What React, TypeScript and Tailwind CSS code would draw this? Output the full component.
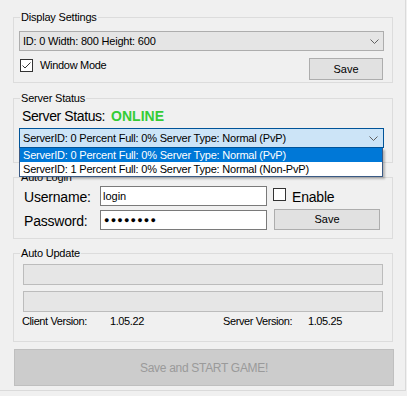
const sans = "font-['Liberation_Sans',Arial,sans-serif]";

function Chevron() {
  return (
    <svg width="9" height="5" viewBox="0 0 9 5" className="shrink-0">
      <path d="M0.5 0.5 L4.5 4.5 L8.5 0.5" fill="none" stroke="#606060" strokeWidth="1" />
    </svg>
  );
}

function CheckBox({ checked = false }: { checked?: boolean }) {
  return (
    <span className="flex h-[13px] w-[13px] shrink-0 items-center justify-center border border-[#333333] bg-white">
      {checked ? (
        <svg width="11" height="11" viewBox="0 0 11 11">
          <path d="M1.5 5.5 L4 8 L9.5 2.5" fill="none" stroke="#333333" strokeWidth="1" />
        </svg>
      ) : null}
    </span>
  );
}

function Group({ title, className, children }: { title: string; className?: string; children: React.ReactNode }) {
  return (
    <fieldset className={`w-[380px] border border-[#dcdcdc] pl-[5px] pr-[8px] ${className ?? ""}`}>
      <legend className="ml-[1px] px-[1px] text-[11px] leading-[13px] tracking-[-0.2px]">{title}</legend>
      {children}
    </fieldset>
  );
}

export default function App() {
  return (
    <div className={`h-[396px] w-[407px] overflow-hidden bg-[#f0f0f0] text-black ${sans}`}>
      <div className="h-[391px] w-[406px] border-b border-r border-[#dadada] pl-[13px] pt-[11px]">
        <Group title="Display Settings" className="pb-[2px]">
          <div className="mt-[7px] flex h-[20px] w-[365px] items-center justify-between border border-[#adadad] bg-[#e5e5e5] pl-[3px] pr-[4px] text-[11px] leading-[13px] tracking-[-0.2px]">
            <span>ID: 0 Width: 800 Height: 600</span>
            <Chevron />
          </div>
          <div className="mt-[7px] flex w-[365px] items-start justify-between">
            <label className="ml-[1px] mt-[1px] flex items-center gap-[7px] text-[11px] leading-[13px] tracking-[-0.3px]">
              <CheckBox checked />
              Window Mode
            </label>
            <button className="mr-[1px] h-[22px] w-[74px] border border-[#adadad] bg-[#e1e1e1] text-[11px] leading-[13px]">
              Save
            </button>
          </div>
        </Group>

        <Group title="Server Status" className="mt-[9px] pb-[14px]">
          <div className="ml-[3px] mt-[3px] flex gap-[6px] text-[14px] leading-[16px] tracking-[-0.4px]">
            <span>Server Status:</span>
            <span className="font-bold tracking-normal text-[#35cc35]">ONLINE</span>
          </div>
          <div className="relative mt-[4px] w-[365px]">
            <div className="flex h-[20px] items-center justify-between border border-[#005499] bg-[#cce4f7] pl-[3px] pr-[5px] text-[11px] leading-[13px] tracking-[-0.2px]">
              <span>ServerID: 0 Percent Full: 0% Server Type: Normal (PvP)</span>
              <Chevron />
            </div>
            <ul className="absolute left-0 top-[20px] z-10 w-[364px] border-x border-b border-[#3a5a85] bg-white text-[11px] leading-[14px] tracking-[-0.2px] shadow-[2px_2px_2px_rgba(0,0,0,0.25)]">
              <li className="h-[14px] bg-[#0078d7] pl-[3px] text-white">ServerID: 0 Percent Full: 0% Server Type: Normal (PvP)</li>
              <li className="h-[14px] pl-[3px]">ServerID: 1 Percent Full: 0% Server Type: Normal (Non-PvP)</li>
            </ul>
          </div>
        </Group>

        <Group title="Auto Login" className="mt-[8px] pb-[8px]">
          <div className="mt-[2px] flex h-[20px] items-start">
            <span className="ml-[5px] mt-[3px] w-[76px] text-[14px] leading-[16px] tracking-[-0.2px]">Username:</span>
            <input
              readOnly
              value="login"
              className="h-[20px] w-[167px] border border-[#7a7a7a] bg-white px-[2px] text-[11px] leading-[13px] outline-none"
            />
            <span className="ml-[6px] mt-[2px]">
              <CheckBox />
            </span>
            <span className="ml-[6px] mt-[3px] text-[14px] leading-[16px] tracking-[-0.2px]">Enable</span>
          </div>
          <div className="mt-[4px] flex h-[20px] items-start">
            <span className="ml-[5px] mt-[3px] w-[76px] text-[14px] leading-[16px] tracking-[-0.2px]">Password:</span>
            <div className="flex h-[20px] w-[167px] items-center border border-[#7a7a7a] bg-white pl-[3px] text-[9px] leading-[10px] tracking-[1.2px]">
              ●●●●●●●●
            </div>
            <button className="-mt-[1px] ml-[7px] h-[21px] w-[106px] border border-[#adadad] bg-[#e1e1e1] text-[11px] leading-[13px]">
              Save
            </button>
          </div>
        </Group>

        <Group title="Auto Update" className="mt-[8px] pb-[13px]">
          <div className="ml-[4px] mt-[4px] h-[21px] w-[360px] border border-[#bcbcbc] bg-[#e6e6e6]" />
          <div className="ml-[4px] mt-[6px] h-[21px] w-[360px] border border-[#bcbcbc] bg-[#e6e6e6]" />
          <div className="ml-[3px] mt-[3px] flex text-[11px] leading-[13px] tracking-[-0.4px]">
            <span className="w-[88px]">Client Version:</span>
            <span className="w-[113px]">1.05.22</span>
            <span className="w-[85px]">Server Version:</span>
            <span>1.05.25</span>
          </div>
        </Group>

        <button className="ml-[1px] mt-[7px] h-[37px] w-[380px] border border-[#bfbfbf] bg-[#cccccc] text-[12px] leading-[14px] tracking-[-0.3px] text-[#9a9a9a]">
          Save and START GAME!
        </button>
      </div>
    </div>
  );
}
